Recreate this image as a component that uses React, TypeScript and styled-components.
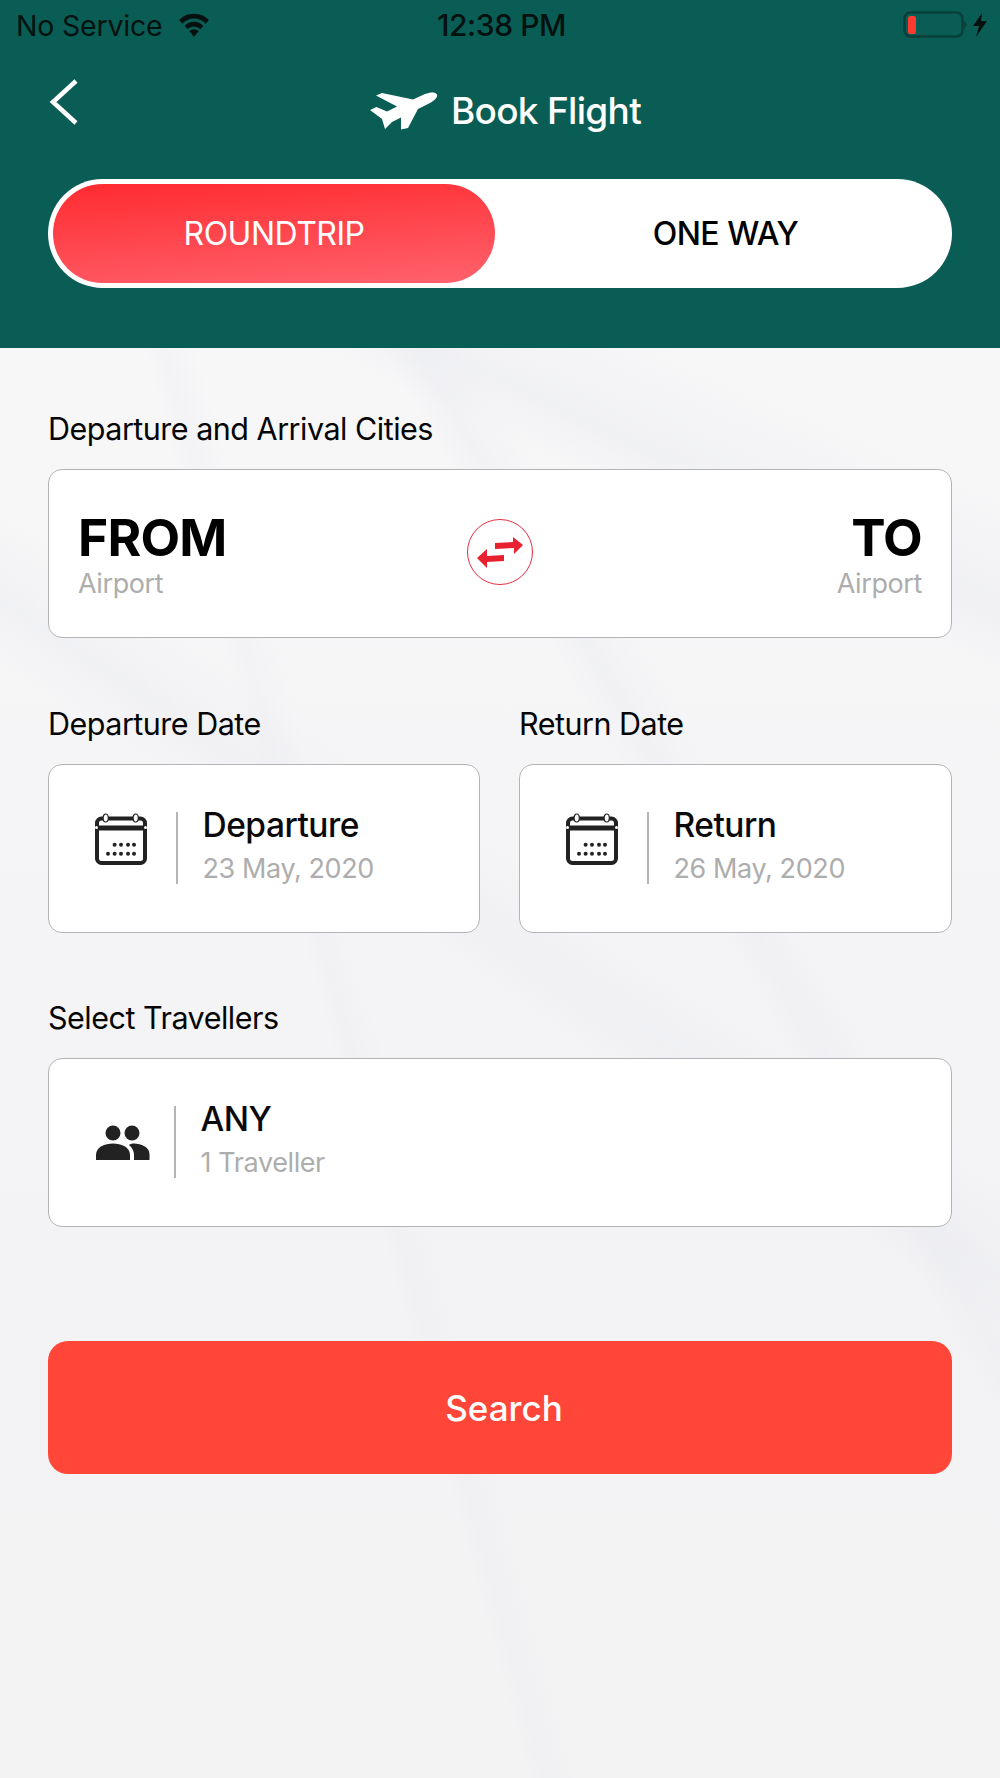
import React from "react";
import styled, {createGlobalStyle} from "styled-components";

const GlobalStyle = createGlobalStyle`
  html, body {
    margin: 0;
    padding: 0;
    background: #f3f3f5;
  }
  * {
    box-sizing: border-box;
  }
`;

const Page = styled.div`
  width: 1000px;
  height: 1778px;
  overflow: hidden;
  font-family: Inter, "Liberation Sans", sans-serif;
  color: #000;
`;

const Header = styled.header`
  height: 348px;
  background: #095d54;
  padding-top: 7px;
`;

const StatusBar = styled.div`
  display: grid;
  grid-template-columns: 1fr auto 1fr;
  align-items: center;
  height: 32px;
  padding: 0 13px 0 16px;
  font-size: 28.5px;
  color: #04110f;
`;

const StatusLeft = styled.div`
  display: flex;
  align-items: center;
  gap: 14px;
  letter-spacing: -0.2px;
`;

const StatusTime = styled.div`
  font-size: 30px;
  font-weight: 500;
  letter-spacing: -0.4px;
`;

const StatusRight = styled.div`
  display: flex;
  align-items: center;
  justify-content: flex-end;
`;

const NavRow = styled.div`
  display: grid;
  grid-template-columns: 1fr auto 1fr;
  align-items: center;
  height: 89px;
  margin: 27px 0 24px;
  padding: 0 48px;
`;

const BackButton = styled.button`
  display: flex;
  width: 34px;
  height: 48px;
  margin-top: -18px;
  padding: 0;
  border: 0;
  background: none;
`;

const Title = styled.div`
  display: flex;
  align-items: center;
  gap: 13px;
  margin-left: 11px;
  font-size: 37px;
  font-weight: 500;
  letter-spacing: -0.7px;
  color: #fff;
`;

const Toggle = styled.div`
  display: grid;
  grid-template-columns: 442px 1fr;
  height: 109px;
  margin: 0 48px;
  padding: 5px;
  border-radius: 55px;
  background: #fff;
`;

const ToggleItem = styled.div<{$active?: boolean}>`
  display: flex;
  align-items: center;
  justify-content: center;
  padding-left: ${(p) => (p.$active ? 0 : 9)}px;
  border-radius: 50px;
  font-size: 32px;
  font-weight: ${(p) => (p.$active ? 400 : 500)};
  letter-spacing: -0.5px;
  color: ${(p) => (p.$active ? "#fff" : "#000")};
  background: ${(p) => (p.$active ? "linear-gradient(176deg, #ff2b30 0%, #ff626d 100%)" : "none")};
`;

const Main = styled.main`
  height: 1430px;
  padding: 59px 48px 0;
  background:
    linear-gradient(25deg, transparent 83%, rgba(232, 233, 238, 0.4) 86%, transparent 92%),
    linear-gradient(34deg, transparent 53%, rgba(232, 233, 238, 0.35) 56%, transparent 60%),
    linear-gradient(60deg, transparent 66%, rgba(232, 233, 238, 0.35) 68%, transparent 71%),
    linear-gradient(75deg, transparent 38%, rgba(232, 233, 238, 0.25) 39.5%, transparent 42%),
    linear-gradient(180deg, #f7f7f8 0%, #f3f3f5 60%, #f3f3f4 100%);
`;

const Label = styled.div`
  font-size: 30.5px;
  line-height: 44px;
  letter-spacing: -0.5px;
  color: #050505;
`;

const Card = styled.div`
  display: flex;
  align-items: center;
  height: 169px;
  margin-top: 18px;
  border: 1.5px solid #b4b4b6;
  border-radius: 14px;
  background: #fff;
`;

const RouteCard = styled(Card)`
  justify-content: space-between;
  padding: 0 29px;
`;

const RouteEnd = styled.div<{$right?: boolean}>`
  display: flex;
  flex-direction: column;
  align-items: ${(p) => (p.$right ? "flex-end" : "flex-start")};
  width: 160px;
  margin-top: 2px;
`;

const RouteCode = styled.div`
  font-size: 51.5px;
  line-height: 58px;
  font-weight: 700;
  letter-spacing: -0.8px;
`;

const SubText = styled.div`
  font-size: 27px;
  line-height: 36px;
  letter-spacing: -0.4px;
  color: #adadad;
`;

const SwapCircle = styled.div`
  display: flex;
  align-items: center;
  justify-content: center;
  width: 66px;
  height: 66px;
  border: 1.5px solid #e0313f;
  border-radius: 50%;
  margin-top: -3px;
`;

const DateRow = styled.div`
  display: grid;
  grid-template-columns: 432px 433px;
  gap: 39px;
  margin-top: 64px;
`;

const TravellerSection = styled.div`
  margin-top: 63px;
`;

const IconSlot = styled.div<{$people?: boolean}>`
  display: flex;
  justify-content: center;
  width: ${(p) => (p.$people ? 125 : 127)}px;
  margin-top: ${(p) => (p.$people ? 0 : -20)}px;
  padding-left: ${(p) => (p.$people ? 23 : 16)}px;
`;

const Divider = styled.div`
  width: 1.5px;
  height: 72px;
  margin-top: -1px;
  background: #b4b4b6;
`;

const InfoBlock = styled.div`
  display: flex;
  flex-direction: column;
  margin-left: 25px;
  margin-top: -7px;
`;

const InfoTitle = styled.div`
  margin-bottom: 4px;
  font-size: 33.5px;
  line-height: 44px;
  letter-spacing: -0.5px;
  font-weight: 500;
  color: #0a0a0a;
`;

const SearchButton = styled.button`
  display: block;
  width: 100%;
  height: 133px;
  margin-top: 114px;
  padding: 0 0 0 8px;
  border: 0;
  border-radius: 20px;
  background: #ff4638;
  font-family: inherit;
  font-size: 35px;
  font-weight: 500;
  color: #fff;
`;

const WifiIcon = () => (
    <svg width="36" height="26" viewBox="0 0 36 28">
        <path d="M18 27 L23 20.5 A8 8 0 0 0 13 20.5 Z" fill="#04110f" />
        <path d="M18 5 A22 22 0 0 1 34 11.5 L30.5 15.6 A17 17 0 0 0 5.5 15.6 L2 11.5 A22 22 0 0 1 18 5 Z" fill="#04110f" transform="translate(0 -3)" />
        <path d="M18 10.5 A13.5 13.5 0 0 1 28 15 L25 18.6 A9.5 9.5 0 0 0 11 18.6 L8 15 A13.5 13.5 0 0 1 18 10.5 Z" fill="#04110f" />
    </svg>
);

const BatteryIcon = () => (
    <svg width="84" height="28" viewBox="0 0 84 28">
        <rect x="1.5" y="1.5" width="58" height="24" rx="6" fill="none" stroke="#0a3f3a" strokeWidth="2.5" />
        <rect x="5" y="5" width="8" height="18" rx="2.5" fill="#ff3b30" />
        <path d="M61 10 L64 14 L61 18 Z" fill="#0a3f3a" />
        <path d="M79 2 L70 15 L76 15 L73 26 L84 10 L78 10 Z" fill="#04110f" />
    </svg>
);

const BackIcon = () => (
    <svg width="34" height="48" viewBox="0 0 34 48">
        <path d="M28 3 L5 24 L28 45" fill="none" stroke="#fff" strokeWidth="4.5" />
    </svg>
);

const PlaneIcon = () => (
    <svg width="68" height="38" viewBox="0 0 68 38">
        <path
            fill="#fff"
            d="M67 2.5 C65.5 -0.5 60 0 55 2 L43 7.5 L12 1 L6 3.5 L27 14.5 L17 19.5 L6.5 15 L0 18 L12 27 L15 37 L22 30 L31 25.5 L31 37.5 L38 36 L48 17 L60 11 C64 8.5 68 5.5 67 2.5 Z"
        />
    </svg>
);

const SwapIcon = () => (
    <svg width="46" height="31" viewBox="0 0 46 31">
        <path fill="#e8202f" d="M18 6 L36 5 V0 L46 8 L37 17 V11 L18 12 Z" />
        <path fill="#e8202f" d="M27 18 L10 19 V12 L0 21 L10 31 V25 L27 24 Z" />
    </svg>
);

const CalendarIcon = () => (
    <svg width="52" height="52" viewBox="0 0 52 52">
        <rect x="2" y="5.5" width="48" height="44.5" rx="4.5" fill="none" stroke="#222" strokeWidth="4" />
        <rect x="1" y="12.5" width="50" height="5" fill="#222" />
        <circle cx="1.5" cy="14.5" r="1.5" fill="#fff" />
        <circle cx="50.5" cy="14.5" r="1.5" fill="#fff" />
        <ellipse cx="10.7" cy="5" rx="2.6" ry="4" fill="#fff" stroke="#222" strokeWidth="1.2" />
        <ellipse cx="40.7" cy="5" rx="2.6" ry="4" fill="#fff" stroke="#222" strokeWidth="1.2" />
        {[19.6, 26, 33, 39].map((x) => <circle key={x} cx={x} cy="31.7" r="2" fill="#222" />)}
        {[13, 19.6, 26, 33, 39].map((x) => <circle key={x} cx={x} cy="40.7" r="2" fill="#222" />)}
    </svg>
);

const PeopleIcon = () => (
    <svg width="54" height="36" viewBox="0 0 54 36">
        <circle cx="17" cy="8" r="7.5" fill="#222" />
        <circle cx="36" cy="8" r="7.5" fill="#222" />
        <path fill="#222" d="M0 35 V30 C0 22 9 18.5 17 18.5 C25 18.5 34 22 34 30 V35 Z" />
        <path fill="#222" d="M38 35 V30 C38 26 36 22.5 33 20 C34 19 36 18.5 38 18.5 C45 18.5 53.5 22 53.5 29 V35 Z" />
    </svg>
);

const App = () => {
    const dates = [
        {label: "Departure Date", title: "Departure", date: "23 May, 2020"},
        {label: "Return Date", title: "Return", date: "26 May, 2020"},
    ];

    return (
        <Page>
            <GlobalStyle />
            <Header>
                <StatusBar>
                    <StatusLeft>No Service <WifiIcon /></StatusLeft>
                    <StatusTime>12:38 PM</StatusTime>
                    <StatusRight><BatteryIcon /></StatusRight>
                </StatusBar>
                <NavRow>
                    <BackButton><BackIcon /></BackButton>
                    <Title><PlaneIcon /> Book Flight</Title>
                </NavRow>
                <Toggle>
                    <ToggleItem $active>ROUNDTRIP</ToggleItem>
                    <ToggleItem>ONE WAY</ToggleItem>
                </Toggle>
            </Header>
            <Main>
                <Label>Departure and Arrival Cities</Label>
                <RouteCard>
                    <RouteEnd>
                        <RouteCode>FROM</RouteCode>
                        <SubText>Airport</SubText>
                    </RouteEnd>
                    <SwapCircle><SwapIcon /></SwapCircle>
                    <RouteEnd $right>
                        <RouteCode>TO</RouteCode>
                        <SubText>Airport</SubText>
                    </RouteEnd>
                </RouteCard>
                <DateRow>
                    {dates.map((item) => (
                        <div key={item.label}>
                            <Label>{item.label}</Label>
                            <Card>
                                <IconSlot><CalendarIcon /></IconSlot>
                                <Divider />
                                <InfoBlock>
                                    <InfoTitle>{item.title}</InfoTitle>
                                    <SubText>{item.date}</SubText>
                                </InfoBlock>
                            </Card>
                        </div>
                    ))}
                </DateRow>
                <TravellerSection>
                    <Label>Select Travellers</Label>
                    <Card>
                        <IconSlot $people><PeopleIcon /></IconSlot>
                        <Divider />
                        <InfoBlock>
                            <InfoTitle>ANY</InfoTitle>
                            <SubText>1 Traveller</SubText>
                        </InfoBlock>
                    </Card>
                </TravellerSection>
                <SearchButton>Search</SearchButton>
            </Main>
        </Page>
    );
};

export default App;
